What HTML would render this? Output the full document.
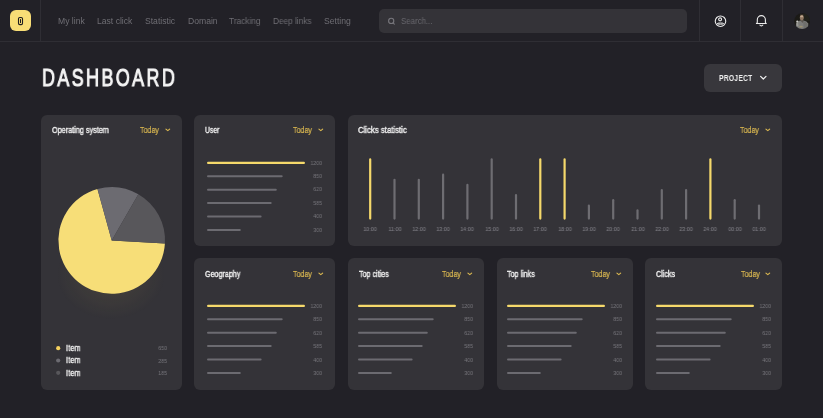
<!DOCTYPE html>
<html><head><meta charset="utf-8">
<style>
*{margin:0;padding:0;box-sizing:border-box}
html,body{width:823px;height:418px;overflow:hidden;background:#222127;font-family:"Liberation Sans",sans-serif}
.a{position:absolute;will-change:transform}
.hdr-b{left:0;top:41px;width:823px;height:1px;background:#2f2e34}
.vd{top:0;width:1px;height:41px;background:#2f2e34}
.logo{left:10.2px;top:10.4px;width:20.8px;height:20.8px;border-radius:6px;background:#f8dd76}
.nav{top:15.5px;font-size:8.6px;line-height:10px;color:#6f6e74;white-space:nowrap}
.search{left:379px;top:9px;width:308.3px;height:24.4px;border-radius:5px;background:#343338}
.title{left:42px;top:63px;font-size:24px;line-height:28px;color:#f4f4f4;white-space:nowrap;transform-origin:0 0}
.proj{left:704px;top:64px;width:78px;height:28px;border-radius:6px;background:#38373c}
.card{background:#343338;border-radius:6px}
.ct{font-size:8.3px;line-height:10px;color:#f2f2f2;-webkit-text-stroke:0.35px #f2f2f2;white-space:nowrap;transform-origin:0 0}
.td{font-size:8.3px;line-height:10px;color:#dcb951;-webkit-text-stroke:0.2px #dcb951;white-space:nowrap;transform-origin:0 0}
.num{font-size:6px;line-height:6px;color:#76757b;white-space:nowrap;transform-origin:100% 0;text-align:right}
.tl{font-size:6px;line-height:6px;color:#7b7a80;-webkit-text-stroke:0.1px #7b7a80;white-space:nowrap;text-align:center;width:30px}
.bar{height:2px;border-radius:1px;background:#68676d}
.ybar{height:2.6px;border-radius:1.3px;background:#f5d96b}
</style></head><body>

<div class="a hdr-b"></div>
<div class="a vd" style="left:40px"></div>
<div class="a vd" style="left:699px"></div>
<div class="a vd" style="left:740px"></div>
<div class="a vd" style="left:782px"></div>
<div class="a logo"></div>
<svg class="a" style="left:16px;top:15px" width="10" height="12" viewBox="0 0 10 12">
<rect x="2.5" y="2.5" width="4" height="7.1" rx="1.3" fill="none" stroke="#1d1c20" stroke-width="1.1"/>
<rect x="4" y="4.1" width="1" height="3.9" fill="#1d1c20"/>
</svg>
<div class="a nav" style="left:57.7px;transform:scaleX(1);transform-origin:0 0">My link</div>
<div class="a nav" style="left:96.8px;transform:scaleX(1);transform-origin:0 0">Last click</div>
<div class="a nav" style="left:144.8px;transform:scaleX(1);transform-origin:0 0">Statistic</div>
<div class="a nav" style="left:187.8px;transform:scaleX(1);transform-origin:0 0">Domain</div>
<div class="a nav" style="left:228.8px;transform:scaleX(0.97);transform-origin:0 0">Tracking</div>
<div class="a nav" style="left:273.2px;transform:scaleX(0.96);transform-origin:0 0">Deep links</div>
<div class="a nav" style="left:323.9px;transform:scaleX(1);transform-origin:0 0">Setting</div>
<div class="a search"></div>
<svg class="a" style="left:386px;top:16px" width="10" height="10" viewBox="0 0 10 10">
<circle cx="5.2" cy="4.9" r="2.6" fill="none" stroke="#77767c" stroke-width="1.1"/>
<path d="M7.1 6.9 L8.3 8.1" stroke="#77767c" stroke-width="1.1" stroke-linecap="round"/>
</svg>
<div class="a nav" style="left:400.7px;top:15.5px;font-size:8.4px;color:#69686e;transform:scaleX(0.94);transform-origin:0 0">Search...</div>
<svg class="a" style="left:712px;top:13px" width="16" height="16" viewBox="0 0 16 16">
<circle cx="8.5" cy="8.2" r="5.25" fill="none" stroke="#ececec" stroke-width="1.1"/>
<circle cx="8.1" cy="6.35" r="1.5" fill="none" stroke="#ececec" stroke-width="1.1"/>
<ellipse cx="8.4" cy="10.6" rx="3.2" ry="0.6" fill="none" stroke="#ececec" stroke-width="1.0"/>
</svg>
<svg class="a" style="left:753px;top:13px" width="16" height="16" viewBox="0 0 16 16">
<path d="M3.4 10.55 L4.3 9.5 L4.3 6.7 A4.05 4.05 0 0 1 12.4 6.7 L12.4 9.5 L13.3 10.55 Z" fill="none" stroke="#ececec" stroke-width="1.1" stroke-linejoin="round"/>
<path d="M6.6 11.7 Q8.35 14.1 10.1 11.7" fill="none" stroke="#ececec" stroke-width="1.1"/>
</svg>
<svg class="a" style="left:794px;top:13px" width="17" height="17" viewBox="0 0 17 17">
<defs><clipPath id="av"><circle cx="8.1" cy="8.1" r="7.9"/></clipPath><filter id="bl" x="-20%" y="-20%" width="140%" height="140%"><feGaussianBlur stdDeviation="0.45"/></filter></defs>
<circle cx="8.1" cy="8.1" r="7.9" fill="#1b1a16"/>
<g clip-path="url(#av)"><g filter="url(#bl)">
<rect x="10" y="0" width="7" height="8" fill="#24241f"/>
<path d="M1.5 17 L2 11 Q3 8.3 6 7.6 L9.5 7.4 Q13 8 14.2 10.5 L14.8 17 Z" fill="#7c7c79"/>
<path d="M9 8 Q12 8.5 13.5 11 L13.8 16 L10 16 Z" fill="#6f6f6c"/>
<path d="M6.5 7.5 L8.5 10 L9.8 7.5 Z" fill="#5a5650"/>
<ellipse cx="7.8" cy="4.6" rx="2.0" ry="2.9" fill="#8d7560"/>
<ellipse cx="7.6" cy="3.4" rx="1.5" ry="0.9" fill="#c4ab92"/>
<path d="M5.8 2.6 Q7.8 0.6 9.8 2.4 L9.6 1.4 Q7.8 0.2 6 1.4 Z" fill="#3a332a"/>
<ellipse cx="3.3" cy="8.6" rx="1.1" ry="1.0" fill="#c9c9c5"/>
<path d="M2.2 9.5 L3 13 L4.5 13.5 L4 9.5 Z" fill="#9a9a96"/>
<ellipse cx="7" cy="13.6" rx="1.8" ry="0.8" fill="#9c9370"/>
</g></g>
</svg>
<div class="a title" style="top:63.6px;font-size:23.5px;letter-spacing:3.1px;-webkit-text-stroke:1px #f4f4f4;transform:scaleX(0.765)">DASHBOARD</div>
<div class="a proj"></div>
<div class="a" style="left:718.8px;top:72.5px;font-size:8.6px;line-height:10px;font-weight:bold;color:#f0f0f0;letter-spacing:0.25px;transform:scaleX(0.79);transform-origin:0 0">PROJECT</div>
<svg class="a" style="left:758px;top:73px" width="10" height="10" viewBox="0 0 10 10">
<path d="M2.6 3.3 L5.3 6.0 L8.0 3.3" fill="none" stroke="#f0f0f0" stroke-width="1.2" stroke-linecap="round" stroke-linejoin="round"/>
</svg>
<div class="a card" style="left:41px;top:114.7px;width:141px;height:275.3px"></div>
<div class="a ct" style="left:51.6px;top:125.2px;transform:scaleX(0.875)">Operating system</div>
<div class="a td" style="left:140.1px;top:125.2px;transform:scaleX(0.85)">Today</div>
<svg class="a" style="left:164.0px;top:127.2px" width="8" height="6" viewBox="0 0 8 6"><path d="M1.95 2.1 L3.8 3.65 L5.65 2.1" fill="none" stroke="#dcb951" stroke-width="1.15" stroke-linecap="round" stroke-linejoin="round"/></svg>
<div class="a card" style="left:194px;top:114.7px;width:141px;height:131.3px"></div>
<div class="a ct" style="left:204.6px;top:125.2px;transform:scaleX(0.82)">User</div>
<div class="a td" style="left:293.1px;top:125.2px;transform:scaleX(0.85)">Today</div>
<svg class="a" style="left:317.0px;top:127.2px" width="8" height="6" viewBox="0 0 8 6"><path d="M1.95 2.1 L3.8 3.65 L5.65 2.1" fill="none" stroke="#dcb951" stroke-width="1.15" stroke-linecap="round" stroke-linejoin="round"/></svg>
<svg class="a" style="left:203.85px;top:154.7px" width="110" height="85" viewBox="0 0 110 85"><line x1="4.15" y1="7.899999999999999" x2="99.85" y2="7.899999999999999" stroke="#f5d96b" stroke-width="2.3" stroke-linecap="round"/><line x1="4" y1="21.299999999999997" x2="77.7" y2="21.299999999999997" stroke="#6c6b71" stroke-width="2" stroke-linecap="round"/><line x1="4" y1="34.7" x2="71.8" y2="34.7" stroke="#6c6b71" stroke-width="2" stroke-linecap="round"/><line x1="4" y1="48.099999999999994" x2="66.7" y2="48.099999999999994" stroke="#6c6b71" stroke-width="2" stroke-linecap="round"/><line x1="4" y1="61.5" x2="56.6" y2="61.5" stroke="#6c6b71" stroke-width="2" stroke-linecap="round"/><line x1="4" y1="74.9" x2="35.8" y2="74.9" stroke="#6c6b71" stroke-width="2" stroke-linecap="round"/></svg>
<div class="a num" style="left:281.54999999999995px;top:159.6px;width:40px;transform:scaleX(0.87)">1200</div>
<div class="a num" style="left:281.54999999999995px;top:173.0px;width:40px;transform:scaleX(0.87)">850</div>
<div class="a num" style="left:281.54999999999995px;top:186.4px;width:40px;transform:scaleX(0.87)">620</div>
<div class="a num" style="left:281.54999999999995px;top:199.8px;width:40px;transform:scaleX(0.87)">585</div>
<div class="a num" style="left:281.54999999999995px;top:213.2px;width:40px;transform:scaleX(0.87)">400</div>
<div class="a num" style="left:281.54999999999995px;top:226.6px;width:40px;transform:scaleX(0.87)">300</div>
<div class="a card" style="left:348px;top:114.7px;width:434.3px;height:131.3px"></div>
<div class="a ct" style="left:357.8px;top:125.2px;transform:scaleX(0.935)">Clicks statistic</div>
<div class="a td" style="left:740.4px;top:125.2px;transform:scaleX(0.85)">Today</div>
<svg class="a" style="left:764.3px;top:127.2px" width="8" height="6" viewBox="0 0 8 6"><path d="M1.95 2.1 L3.8 3.65 L5.65 2.1" fill="none" stroke="#dcb951" stroke-width="1.15" stroke-linecap="round" stroke-linejoin="round"/></svg>
<div class="a card" style="left:194px;top:258px;width:141px;height:132px"></div>
<div class="a ct" style="left:204.6px;top:268.5px;transform:scaleX(0.86)">Geography</div>
<div class="a td" style="left:293.1px;top:268.5px;transform:scaleX(0.85)">Today</div>
<svg class="a" style="left:317.0px;top:270.5px" width="8" height="6" viewBox="0 0 8 6"><path d="M1.95 2.1 L3.8 3.65 L5.65 2.1" fill="none" stroke="#dcb951" stroke-width="1.15" stroke-linecap="round" stroke-linejoin="round"/></svg>
<svg class="a" style="left:203.85px;top:298px" width="110" height="85" viewBox="0 0 110 85"><line x1="4.15" y1="7.899999999999999" x2="99.85" y2="7.899999999999999" stroke="#f5d96b" stroke-width="2.3" stroke-linecap="round"/><line x1="4" y1="21.299999999999997" x2="77.7" y2="21.299999999999997" stroke="#6c6b71" stroke-width="2" stroke-linecap="round"/><line x1="4" y1="34.7" x2="71.8" y2="34.7" stroke="#6c6b71" stroke-width="2" stroke-linecap="round"/><line x1="4" y1="48.099999999999994" x2="66.7" y2="48.099999999999994" stroke="#6c6b71" stroke-width="2" stroke-linecap="round"/><line x1="4" y1="61.5" x2="56.6" y2="61.5" stroke="#6c6b71" stroke-width="2" stroke-linecap="round"/><line x1="4" y1="74.9" x2="35.8" y2="74.9" stroke="#6c6b71" stroke-width="2" stroke-linecap="round"/></svg>
<div class="a num" style="left:281.54999999999995px;top:302.9px;width:40px;transform:scaleX(0.87)">1200</div>
<div class="a num" style="left:281.54999999999995px;top:316.29999999999995px;width:40px;transform:scaleX(0.87)">850</div>
<div class="a num" style="left:281.54999999999995px;top:329.7px;width:40px;transform:scaleX(0.87)">620</div>
<div class="a num" style="left:281.54999999999995px;top:343.09999999999997px;width:40px;transform:scaleX(0.87)">585</div>
<div class="a num" style="left:281.54999999999995px;top:356.5px;width:40px;transform:scaleX(0.87)">400</div>
<div class="a num" style="left:281.54999999999995px;top:369.9px;width:40px;transform:scaleX(0.87)">300</div>
<div class="a card" style="left:348px;top:258px;width:136px;height:132px"></div>
<div class="a ct" style="left:358.6px;top:268.5px;transform:scaleX(0.86)">Top cities</div>
<div class="a td" style="left:442.1px;top:268.5px;transform:scaleX(0.85)">Today</div>
<svg class="a" style="left:466.0px;top:270.5px" width="8" height="6" viewBox="0 0 8 6"><path d="M1.95 2.1 L3.8 3.65 L5.65 2.1" fill="none" stroke="#dcb951" stroke-width="1.15" stroke-linecap="round" stroke-linejoin="round"/></svg>
<svg class="a" style="left:355.35px;top:298px" width="110" height="85" viewBox="0 0 110 85"><line x1="4.15" y1="7.899999999999999" x2="99.85" y2="7.899999999999999" stroke="#f5d96b" stroke-width="2.3" stroke-linecap="round"/><line x1="4" y1="21.299999999999997" x2="77.7" y2="21.299999999999997" stroke="#6c6b71" stroke-width="2" stroke-linecap="round"/><line x1="4" y1="34.7" x2="71.8" y2="34.7" stroke="#6c6b71" stroke-width="2" stroke-linecap="round"/><line x1="4" y1="48.099999999999994" x2="66.7" y2="48.099999999999994" stroke="#6c6b71" stroke-width="2" stroke-linecap="round"/><line x1="4" y1="61.5" x2="56.6" y2="61.5" stroke="#6c6b71" stroke-width="2" stroke-linecap="round"/><line x1="4" y1="74.9" x2="35.8" y2="74.9" stroke="#6c6b71" stroke-width="2" stroke-linecap="round"/></svg>
<div class="a num" style="left:433.05px;top:302.9px;width:40px;transform:scaleX(0.87)">1200</div>
<div class="a num" style="left:433.05px;top:316.29999999999995px;width:40px;transform:scaleX(0.87)">850</div>
<div class="a num" style="left:433.05px;top:329.7px;width:40px;transform:scaleX(0.87)">620</div>
<div class="a num" style="left:433.05px;top:343.09999999999997px;width:40px;transform:scaleX(0.87)">585</div>
<div class="a num" style="left:433.05px;top:356.5px;width:40px;transform:scaleX(0.87)">400</div>
<div class="a num" style="left:433.05px;top:369.9px;width:40px;transform:scaleX(0.87)">300</div>
<div class="a card" style="left:496.7px;top:258px;width:136.4px;height:132px"></div>
<div class="a ct" style="left:507.3px;top:268.5px;transform:scaleX(0.86)">Top links</div>
<div class="a td" style="left:591.2px;top:268.5px;transform:scaleX(0.85)">Today</div>
<svg class="a" style="left:615.1px;top:270.5px" width="8" height="6" viewBox="0 0 8 6"><path d="M1.95 2.1 L3.8 3.65 L5.65 2.1" fill="none" stroke="#dcb951" stroke-width="1.15" stroke-linecap="round" stroke-linejoin="round"/></svg>
<svg class="a" style="left:504.25px;top:298px" width="110" height="85" viewBox="0 0 110 85"><line x1="4.15" y1="7.899999999999999" x2="99.85" y2="7.899999999999999" stroke="#f5d96b" stroke-width="2.3" stroke-linecap="round"/><line x1="4" y1="21.299999999999997" x2="77.7" y2="21.299999999999997" stroke="#6c6b71" stroke-width="2" stroke-linecap="round"/><line x1="4" y1="34.7" x2="71.8" y2="34.7" stroke="#6c6b71" stroke-width="2" stroke-linecap="round"/><line x1="4" y1="48.099999999999994" x2="66.7" y2="48.099999999999994" stroke="#6c6b71" stroke-width="2" stroke-linecap="round"/><line x1="4" y1="61.5" x2="56.6" y2="61.5" stroke="#6c6b71" stroke-width="2" stroke-linecap="round"/><line x1="4" y1="74.9" x2="35.8" y2="74.9" stroke="#6c6b71" stroke-width="2" stroke-linecap="round"/></svg>
<div class="a num" style="left:581.9499999999999px;top:302.9px;width:40px;transform:scaleX(0.87)">1200</div>
<div class="a num" style="left:581.9499999999999px;top:316.29999999999995px;width:40px;transform:scaleX(0.87)">850</div>
<div class="a num" style="left:581.9499999999999px;top:329.7px;width:40px;transform:scaleX(0.87)">620</div>
<div class="a num" style="left:581.9499999999999px;top:343.09999999999997px;width:40px;transform:scaleX(0.87)">585</div>
<div class="a num" style="left:581.9499999999999px;top:356.5px;width:40px;transform:scaleX(0.87)">400</div>
<div class="a num" style="left:581.9499999999999px;top:369.9px;width:40px;transform:scaleX(0.87)">300</div>
<div class="a card" style="left:645px;top:258px;width:137.4px;height:132px"></div>
<div class="a ct" style="left:655.6px;top:268.5px;transform:scaleX(0.86)">Clicks</div>
<div class="a td" style="left:740.5px;top:268.5px;transform:scaleX(0.85)">Today</div>
<svg class="a" style="left:764.4px;top:270.5px" width="8" height="6" viewBox="0 0 8 6"><path d="M1.95 2.1 L3.8 3.65 L5.65 2.1" fill="none" stroke="#dcb951" stroke-width="1.15" stroke-linecap="round" stroke-linejoin="round"/></svg>
<svg class="a" style="left:653.05px;top:298px" width="110" height="85" viewBox="0 0 110 85"><line x1="4.15" y1="7.899999999999999" x2="99.85" y2="7.899999999999999" stroke="#f5d96b" stroke-width="2.3" stroke-linecap="round"/><line x1="4" y1="21.299999999999997" x2="77.7" y2="21.299999999999997" stroke="#6c6b71" stroke-width="2" stroke-linecap="round"/><line x1="4" y1="34.7" x2="71.8" y2="34.7" stroke="#6c6b71" stroke-width="2" stroke-linecap="round"/><line x1="4" y1="48.099999999999994" x2="66.7" y2="48.099999999999994" stroke="#6c6b71" stroke-width="2" stroke-linecap="round"/><line x1="4" y1="61.5" x2="56.6" y2="61.5" stroke="#6c6b71" stroke-width="2" stroke-linecap="round"/><line x1="4" y1="74.9" x2="35.8" y2="74.9" stroke="#6c6b71" stroke-width="2" stroke-linecap="round"/></svg>
<div class="a num" style="left:730.7499999999999px;top:302.9px;width:40px;transform:scaleX(0.87)">1200</div>
<div class="a num" style="left:730.7499999999999px;top:316.29999999999995px;width:40px;transform:scaleX(0.87)">850</div>
<div class="a num" style="left:730.7499999999999px;top:329.7px;width:40px;transform:scaleX(0.87)">620</div>
<div class="a num" style="left:730.7499999999999px;top:343.09999999999997px;width:40px;transform:scaleX(0.87)">585</div>
<div class="a num" style="left:730.7499999999999px;top:356.5px;width:40px;transform:scaleX(0.87)">400</div>
<div class="a num" style="left:730.7499999999999px;top:369.9px;width:40px;transform:scaleX(0.87)">300</div>
<svg class="a" style="left:348px;top:150px" width="434" height="75" viewBox="0 0 434 75"><line x1="22.20" y1="9.40" x2="22.20" y2="68.60" stroke="#f5d96b" stroke-width="2.2" stroke-linecap="round"/><line x1="46.50" y1="29.80" x2="46.50" y2="68.60" stroke="#6e6d72" stroke-width="2.2" stroke-linecap="round"/><line x1="70.80" y1="29.80" x2="70.80" y2="68.60" stroke="#6e6d72" stroke-width="2.2" stroke-linecap="round"/><line x1="95.10" y1="24.70" x2="95.10" y2="68.60" stroke="#6e6d72" stroke-width="2.2" stroke-linecap="round"/><line x1="119.40" y1="34.90" x2="119.40" y2="68.60" stroke="#6e6d72" stroke-width="2.2" stroke-linecap="round"/><line x1="143.70" y1="9.40" x2="143.70" y2="68.60" stroke="#6e6d72" stroke-width="2.2" stroke-linecap="round"/><line x1="168.00" y1="45.10" x2="168.00" y2="68.60" stroke="#6e6d72" stroke-width="2.2" stroke-linecap="round"/><line x1="192.30" y1="9.40" x2="192.30" y2="68.60" stroke="#f5d96b" stroke-width="2.2" stroke-linecap="round"/><line x1="216.60" y1="9.40" x2="216.60" y2="68.60" stroke="#f5d96b" stroke-width="2.2" stroke-linecap="round"/><line x1="240.90" y1="55.60" x2="240.90" y2="68.60" stroke="#6e6d72" stroke-width="2.2" stroke-linecap="round"/><line x1="265.20" y1="50.20" x2="265.20" y2="68.60" stroke="#6e6d72" stroke-width="2.2" stroke-linecap="round"/><line x1="289.50" y1="60.40" x2="289.50" y2="68.60" stroke="#6e6d72" stroke-width="2.2" stroke-linecap="round"/><line x1="313.80" y1="40.00" x2="313.80" y2="68.60" stroke="#6e6d72" stroke-width="2.2" stroke-linecap="round"/><line x1="338.10" y1="40.00" x2="338.10" y2="68.60" stroke="#6e6d72" stroke-width="2.2" stroke-linecap="round"/><line x1="362.40" y1="9.40" x2="362.40" y2="68.60" stroke="#f5d96b" stroke-width="2.2" stroke-linecap="round"/><line x1="386.70" y1="50.20" x2="386.70" y2="68.60" stroke="#6e6d72" stroke-width="2.2" stroke-linecap="round"/><line x1="411.00" y1="55.60" x2="411.00" y2="68.60" stroke="#6e6d72" stroke-width="2.2" stroke-linecap="round"/></svg>
<div class="a tl" style="left:355.2px;top:226px;transform:scaleX(0.9)">10:00</div>
<div class="a tl" style="left:379.5px;top:226px;transform:scaleX(0.9)">11:00</div>
<div class="a tl" style="left:403.8px;top:226px;transform:scaleX(0.9)">12:00</div>
<div class="a tl" style="left:428.1px;top:226px;transform:scaleX(0.9)">13:00</div>
<div class="a tl" style="left:452.4px;top:226px;transform:scaleX(0.9)">14:00</div>
<div class="a tl" style="left:476.7px;top:226px;transform:scaleX(0.9)">15:00</div>
<div class="a tl" style="left:501.0px;top:226px;transform:scaleX(0.9)">16:00</div>
<div class="a tl" style="left:525.3px;top:226px;transform:scaleX(0.9)">17:00</div>
<div class="a tl" style="left:549.6px;top:226px;transform:scaleX(0.9)">18:00</div>
<div class="a tl" style="left:573.9px;top:226px;transform:scaleX(0.9)">19:00</div>
<div class="a tl" style="left:598.2px;top:226px;transform:scaleX(0.9)">20:00</div>
<div class="a tl" style="left:622.5px;top:226px;transform:scaleX(0.9)">21:00</div>
<div class="a tl" style="left:646.8px;top:226px;transform:scaleX(0.9)">22:00</div>
<div class="a tl" style="left:671.1px;top:226px;transform:scaleX(0.9)">23:00</div>
<div class="a tl" style="left:695.4px;top:226px;transform:scaleX(0.9)">24:00</div>
<div class="a tl" style="left:719.7px;top:226px;transform:scaleX(0.9)">00:00</div>
<div class="a tl" style="left:744.0px;top:226px;transform:scaleX(0.9)">01:00</div>
<div class="a" style="left:56px;top:230px;width:110px;height:90px;border-radius:50%;background:radial-gradient(ellipse at center, rgba(240,200,90,0.10), rgba(240,200,90,0) 70%)"></div>
<svg class="a" style="left:0;top:0" width="823" height="418"><path d="M111.7 240.4 L164.91 243.47 A53.3 53.3 0 1 1 97.46 189.04 Z" fill="#f7de78"/><path d="M111.7 240.4 L97.46 189.04 A53.3 53.3 0 0 1 138.35 194.24 Z" fill="#6c6b71"/><path d="M111.7 240.4 L138.35 194.24 A53.3 53.3 0 0 1 164.91 243.47 Z" fill="#58575b"/></svg>
<svg class="a" style="left:50px;top:340px" width="16" height="40"><circle cx="8.2" cy="8.20" r="2.1" fill="#f5d15e"/></svg>
<div class="a ct" style="left:65.6px;top:343px;font-size:8.4px;letter-spacing:0.35px;transform:scaleX(0.84)">Item</div>
<div class="a num" style="left:127px;top:345.2px;width:40px;transform:scaleX(0.87)">650</div>
<svg class="a" style="left:50px;top:340px" width="16" height="40"><circle cx="8.2" cy="20.50" r="2.1" fill="#6c6b71"/></svg>
<div class="a ct" style="left:65.6px;top:355px;font-size:8.4px;letter-spacing:0.35px;transform:scaleX(0.84)">Item</div>
<div class="a num" style="left:127px;top:357.5px;width:40px;transform:scaleX(0.87)">285</div>
<svg class="a" style="left:50px;top:340px" width="16" height="40"><circle cx="8.2" cy="32.80" r="2.1" fill="#58575b"/></svg>
<div class="a ct" style="left:65.6px;top:368px;font-size:8.4px;letter-spacing:0.35px;transform:scaleX(0.84)">Item</div>
<div class="a num" style="left:127px;top:369.8px;width:40px;transform:scaleX(0.87)">185</div>
</body></html>
